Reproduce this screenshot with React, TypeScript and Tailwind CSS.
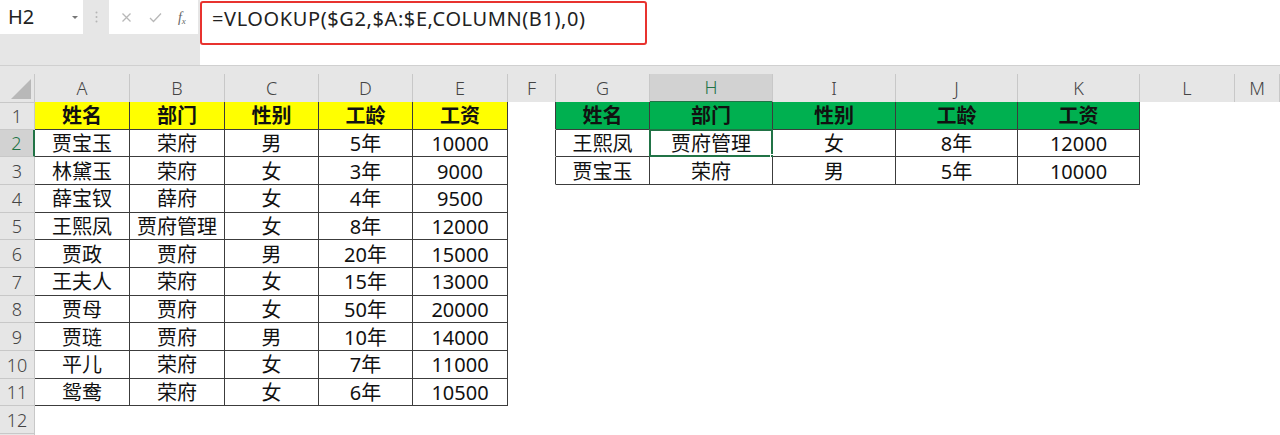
import React from "react";

const FONT = { fontFamily: '"Noto Sans", "Noto Sans CJK SC", sans-serif' };

const COLS = ["A", "B", "C", "D", "E", "F", "G", "H", "I", "J", "K", "L", "M"];

const LEFT_HEAD = ["姓名", "部门", "性别", "工龄", "工资"];
const LEFT_ROWS = [
  ["贾宝玉", "荣府", "男", "5年", "10000"],
  ["林黛玉", "荣府", "女", "3年", "9000"],
  ["薛宝钗", "薛府", "女", "4年", "9500"],
  ["王熙凤", "贾府管理", "女", "8年", "12000"],
  ["贾政", "贾府", "男", "20年", "15000"],
  ["王夫人", "荣府", "女", "15年", "13000"],
  ["贾母", "贾府", "女", "50年", "20000"],
  ["贾琏", "贾府", "男", "10年", "14000"],
  ["平儿", "荣府", "女", "7年", "11000"],
  ["鸳鸯", "荣府", "女", "6年", "10500"],
];
const RIGHT_ROWS = [
  ["王熙凤", "贾府管理", "女", "8年", "12000"],
  ["贾宝玉", "荣府", "男", "5年", "10000"],
];

// 行号列 + A..L 固定宽度，M 吃掉剩余
const GRID = "grid grid-cols-[35px_95px_95px_94px_94px_95px_48px_94px_123px_123px_122px_122px_95px_1fr]";

// 单元格内容 + 样式：左表 A–E(列 0–4)，右表 G–K(列 6–10)；网格线关闭，只有表格边框
function cellOf(row: number, col: number): { text: string; kind: "yellow" | "green" | "table" | "plain"; darkR: boolean } {
  if (col <= 4 && row >= 1 && row <= 11) {
    if (row === 1) return { text: LEFT_HEAD[col], kind: "yellow", darkR: true };
    return { text: LEFT_ROWS[row - 2][col], kind: "table", darkR: true };
  }
  if (col >= 6 && col <= 10 && row >= 1 && row <= 3) {
    if (row === 1) return { text: LEFT_HEAD[col - 6], kind: "green", darkR: true };
    return { text: RIGHT_ROWS[row - 2][col - 6], kind: "table", darkR: true };
  }
  // F 列紧挨右表左边框
  return { text: "", kind: "plain", darkR: col === 5 && row >= 1 && row <= 3 };
}

function Cell({ row, col }: { row: number; col: number }) {
  const c = cellOf(row, col);
  const inTable = c.kind !== "plain";
  const selected = row === 2 && col === 7;
  return (
    <div
      className={[
        "relative flex h-[27.67px] items-center justify-center border-b border-r pt-[2px] text-[20px] leading-none text-[#111]",
        c.kind === "yellow" ? "bg-[#ffff00] font-bold" : c.kind === "green" ? "bg-[#00b050] font-bold" : "bg-white",
        c.darkR ? "border-r-[#3c3c3c]" : "border-r-transparent",
        inTable ? "border-b-[#3c3c3c]" : "border-b-transparent",
      ].join(" ")}
    >
      {c.text}
      {selected && (
        <>
          <div className="pointer-events-none absolute -left-px -top-px bottom-[-1px] right-[-1px] border-2 border-[#217346]" />
          <div className="absolute -bottom-[4px] -right-[4px] h-[6px] w-[6px] border border-white bg-[#217346]" />
        </>
      )}
    </div>
  );
}

function FormulaBar() {
  return (
    <div className="flex h-[65px] bg-[#e6e6e6]">
      <div className="flex h-[34px] w-[83px] items-center justify-between bg-white pl-[8px] pr-[4px]">
        <span className="text-[20px] text-[#222]">H2</span>
        <svg width="8" height="5" viewBox="0 0 8 5"><path d="M1 1 L4 4 L7 1 Z" fill="#777" /></svg>
      </div>
      <div className="flex h-[34px] w-[26px] items-center justify-center">
        <svg width="3" height="12" viewBox="0 0 3 12">
          <circle cx="1.5" cy="1.5" r="1" fill="#b5b5b5" />
          <circle cx="1.5" cy="6" r="1" fill="#b5b5b5" />
          <circle cx="1.5" cy="10.5" r="1" fill="#b5b5b5" />
        </svg>
      </div>
      <div className="flex h-[34px] w-[89px] items-center justify-around bg-white px-[4px]">
        <svg width="11" height="11" viewBox="0 0 11 11"><path d="M1.5 1.5 L9.5 9.5 M9.5 1.5 L1.5 9.5" stroke="#b8b8b8" strokeWidth="1.3" /></svg>
        <svg width="13" height="11" viewBox="0 0 13 11"><path d="M1 6 L4.5 9.5 L12 1.5" stroke="#b8b8b8" strokeWidth="1.3" fill="none" /></svg>
        <span className="text-[14px] italic text-[#666]" style={{ fontFamily: '"Liberation Serif", serif' }}>
          f<sub className="text-[9px]">x</sub>
        </span>
      </div>
      <div className="ml-[2px] flex-1 bg-white pt-[1px]">
        <div className="flex h-[44px] w-[447px] items-start rounded-[3px] border-2 border-[#e8332f] pl-[10px] pt-[6px]">
          <span className="text-[20px] leading-none tracking-[0.6px] text-[#222]">=VLOOKUP($G2,$A:$E,COLUMN(B1),0)</span>
        </div>
      </div>
    </div>
  );
}

export default function App() {
  const rows = Array.from({ length: 13 }, (_, i) => i + 1);
  return (
    <div className="h-[435px] w-[1280px] overflow-hidden bg-white" style={FONT}>
      <FormulaBar />
      <div className="h-[9px] border-t border-[#d0d0d0] bg-[#e6e6e6]" />
      {/* 列标 */}
      <div className={`${GRID} h-[28px] bg-[#e6e6e6]`}>
        <div className="relative border-b border-r border-[#c8c8c8]">
          <svg className="absolute bottom-[3px] right-[3px]" width="20" height="20" viewBox="0 0 20 20">
            <path d="M20 0 L20 20 L0 20 Z" fill="#b8b8b8" />
          </svg>
        </div>
        {COLS.map((c, i) => (
          <div
            key={c}
            className={
              i === 7
                ? "flex items-center justify-center border-b-2 border-r border-b-[#217346] border-r-[#c8c8c8] bg-[#d2d2d2] text-[18px] font-light text-[#217346]"
                : "flex items-center justify-center border-b border-r border-[#c8c8c8] text-[18px] font-light text-[#444]"
            }
          >
            {c}
          </div>
        ))}
      </div>
      {rows.map((r) => (
        <div key={r} className={GRID}>
          <div
            className={
              r === 2
                ? "flex h-[27.67px] items-center justify-center border-b border-r-2 border-b-[#c8c8c8] border-r-[#217346] bg-[#d2d2d2] pt-[2px] text-[18px] font-light text-[#217346]"
                : "flex h-[27.67px] items-center justify-center border-b border-r border-[#c8c8c8] bg-[#e6e6e6] pt-[2px] text-[18px] font-light text-[#444]"
            }
          >
            {r <= 12 ? r : ""}
          </div>
          {COLS.map((_, ci) => (
            <Cell key={ci} row={r} col={ci} />
          ))}
        </div>
      ))}
    </div>
  );
}
